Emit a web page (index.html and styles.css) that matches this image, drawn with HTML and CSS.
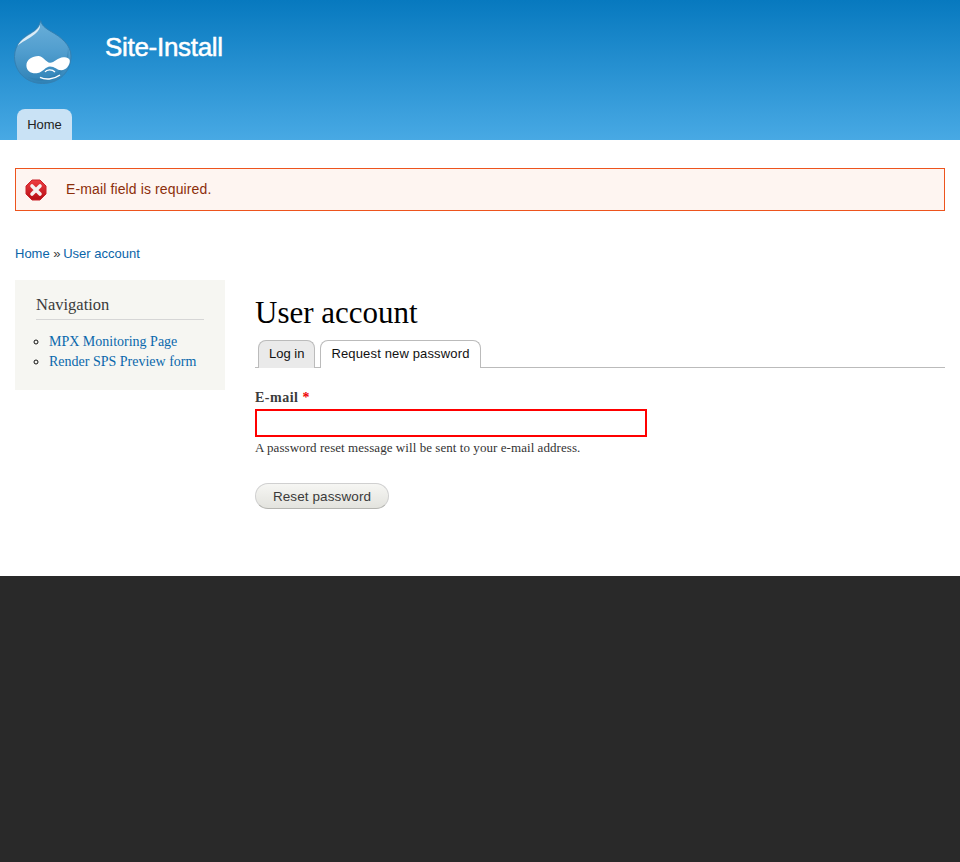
FILE: index.html
```html
<!DOCTYPE html>
<html lang="en">
<head>
<meta charset="utf-8">
<title>User account | Site-Install</title>
<link rel="stylesheet" href="styles.css">
</head>
<body>
<header class="site-header">
  <div class="branding">
    <svg class="logo" width="58" height="65" viewBox="0 0 58 65" aria-label="Home">
      <defs>
        <linearGradient id="drop" x1="0" y1="0" x2="0" y2="1">
          <stop offset="0" stop-color="#6aafd9"/>
          <stop offset="0.5" stop-color="#509dce"/>
          <stop offset="1" stop-color="#2f82b6"/>
        </linearGradient>
      </defs>
      <path d="M26.7 0.7 C27.5 5 31 8 37 11.5 C47 17 57 25 57 36 C57 52 45 63.5 28.5 63.5 C12.5 63.5 0.5 52 0.5 36.5 C0.5 24 10 16.5 17.5 12.5 C22 10 25.5 6 26.7 0.7 Z" fill="url(#drop)" stroke="#3480b2" stroke-width="1"/>
      <path d="M54 27 C56 37 53 51 41 58 C33 62 22 62 14 57 C24 60 36 59 44 52 C51 45 54 36 54 27 Z" fill="#2a78ab" opacity="0.4"/>
      <path d="M26 5 C24 10 18 13 12 17 C8 19.5 5 22.5 3.5 26 C7 22 15 19 21 14 C24.5 11 26.5 8 26 5 Z" fill="#dcecf6"/>
      <path d="M12.4 45.5 C12.4 39.5 18.5 36 24.3 36 C29 36 32 42.5 36 42.8 C40 43 44 37.5 49.3 37.3 C53 37.2 55.8 38.5 55.8 41 C55.8 45.5 52 50 47.5 50.2 C43 50.4 41 46.5 36 46.5 C31.5 46.5 29 52 24 53 C18 54.2 12.4 51.5 12.4 45.5 Z" fill="#fff"/>
      <path d="M31 52 C32.5 49.3 38 48.8 41 52" fill="none" stroke="#fff" stroke-width="1.3"/>
      <path d="M26 57.3 C31 59.8 39 60 46 55" fill="none" stroke="#fff" stroke-width="1.5"/>
    </svg>
    <div class="site-name">Site-Install</div>
  </div>
  <nav class="main-menu"><a class="main-tab" href="#">Home</a></nav>
</header>

<div class="messages">
  <svg class="msg-icon" width="24" height="24" viewBox="0 0 24 24" aria-hidden="true">
    <defs>
      <linearGradient id="oct" x1="0" y1="0" x2="0" y2="1">
        <stop offset="0" stop-color="#ee3d42"/>
        <stop offset="1" stop-color="#b50d14"/>
      </linearGradient>
    </defs>
    <path d="M8 2 H16 L22 8 V16 L16 22 H8 L2 16 V8 Z" fill="url(#oct)" stroke="#c9222a" stroke-linejoin="round" stroke-width="1"/>
    <path d="M8 8 L16 16 M16 8 L8 16" stroke="#f6f2f2" stroke-width="3.6" stroke-linecap="round"/>
  </svg>
  <span class="msg-text">E-mail field is required.</span>
</div>

<div class="breadcrumb"><a href="#">Home</a> <span class="sep">»</span> <a href="#">User account</a></div>

<div class="columns">
  <aside class="sidebar">
    <h2 class="block-title">Navigation</h2>
    <ul class="menu">
      <li><a href="#">MPX Monitoring Page</a></li>
      <li><a href="#">Render SPS Preview form</a></li>
    </ul>
  </aside>
  <main class="content">
    <h1 class="page-title">User account</h1>
    <ul class="tabs">
      <li class="tab"><a href="#">Log in</a></li>
      <li class="tab active"><a href="#">Request new password</a></li>
    </ul>
    <form class="form">
      <label class="label" for="mail">E-mail <span class="req">*</span></label>
      <input class="input" id="mail" type="text">
      <div class="desc">A password reset message will be sent to your e-mail address.</div>
      <button class="button" type="button">Reset password</button>
    </form>
  </main>
</div>

<footer class="site-footer"></footer>
</body>
</html>
```
FILE: styles.css
```css
* { box-sizing: border-box; }
html, body { margin: 0; padding: 0; height: 100%; }
body {
  display: flex;
  flex-direction: column;
  background: #fff;
  font-family: "Liberation Sans", Arial, sans-serif;
  color: #3b3b3b;
  overflow: hidden;
}
a { text-decoration: none; color: #0a64a8; }

.site-header {
  height: 140px;
  flex: none;
  display: flex;
  flex-direction: column;
  justify-content: space-between;
  background: linear-gradient(to bottom, #0779bf, #48a9e4);
}
.branding {
  display: flex;
  align-items: flex-start;
  padding: 20px 0 0 14px;
}
.logo { flex: none; }
.site-name {
  margin: 13px 0 0 33px;
  font-size: 26px;
  line-height: 28px;
  letter-spacing: -0.3px;
  color: #fff;
  font-weight: 400;
  -webkit-text-stroke: 0.5px #fff;
}
.main-menu { padding-left: 17px; }
.main-tab {
  display: block;
  width: 55px;
  height: 31px;
  background: #c9e2f5;
  border-radius: 8px 8px 0 0;
  font-size: 13px;
  line-height: 31px;
  text-align: center;
  color: #222;
}

.messages {
  flex: none;
  height: 43px;
  margin: 28px 15px 0;
  padding-left: 8px;
  display: flex;
  align-items: center;
  background: #fef5f1;
  border: 1px solid #ed541d;
  font-size: 14px;
  color: #8c2e0b;
}
.msg-icon { flex: none; margin-right: 18px; }
.msg-text { margin-bottom: 2px; letter-spacing: 0.12px; }

.breadcrumb {
  flex: none;
  margin: 34px 15px 0;
  font-size: 13px;
  line-height: 17px;
  color: #3b3b3b;
}
.sep { margin-right: -1px; }

.columns {
  flex: none;
  display: flex;
  height: 296px;
  margin-top: 18px;
  padding: 0 15px;
}
.sidebar {
  flex: none;
  width: 210px;
  height: 110px;
  padding: 15px 21px 0;
  background: #f6f6f2;
  font-family: "Liberation Serif", Georgia, serif;
}
.block-title {
  margin: 0;
  height: 25px;
  font-size: 16.5px;
  line-height: 20px;
  font-weight: 400;
  color: #3b3b3b;
  border-bottom: 1px solid #d6d6d6;
}
.menu {
  margin: 12px 0 0;
  padding: 0 0 0 13px;
  list-style: circle;
  font-size: 14px;
  line-height: 20px;
  color: #111;
}
.menu a { color: #0a68ac; }
.content {
  flex: 1;
  min-width: 0;
  margin-left: 30px;
  padding-top: 15px;
  font-family: "Liberation Serif", Georgia, serif;
}
.page-title {
  margin: 0;
  font-size: 31px;
  line-height: 35px;
  font-weight: 400;
  color: #000;
}
.tabs {
  display: flex;
  gap: 5px;
  margin: 10px 0 0;
  padding: 0 0 0 3px;
  height: 28px;
  list-style: none;
  border-bottom: 1px solid #bbb;
  font-family: "Liberation Sans", Arial, sans-serif;
  font-size: 13px;
}
.tab {
  height: 28px;
  border: 1px solid #bbb;
  border-bottom: 0;
  border-radius: 8px 8px 0 0;
  background: #eaeaea;
}
.tab a {
  display: block;
  padding: 0 10px;
  line-height: 26px;
  color: #111;
}
.tab.active { background: #fff; letter-spacing: 0.15px; }
.form { padding-top: 21px; }
.label {
  display: block;
  font-size: 14px;
  line-height: 18px;
  font-weight: 700;
  letter-spacing: 0.5px;
  color: #3b3b3b;
}
.req { color: #e00; }
.input {
  display: block;
  width: 392px;
  height: 28px;
  margin-top: 2px;
  background: #fff;
  border: 2px solid #f00;
  outline: 0;
}
.desc {
  margin-top: 3px;
  font-size: 13px;
  line-height: 15px;
  letter-spacing: 0.06px;
  color: #333;
}
.button {
  display: block;
  width: 134px;
  height: 26px;
  margin-top: 28px;
  padding: 0;
  border: 1px solid #d0d0d0;
  border-bottom-color: #b4b4b0;
  border-radius: 13px;
  background: linear-gradient(to bottom, #f6f6f3, #e3e3de);
  font-family: "Liberation Sans", Arial, sans-serif;
  font-size: 13.5px;
  letter-spacing: 0.1px;
  color: #3a3a3a;
}

.site-footer {
  flex: 1;
  background: #292929;
}
```
